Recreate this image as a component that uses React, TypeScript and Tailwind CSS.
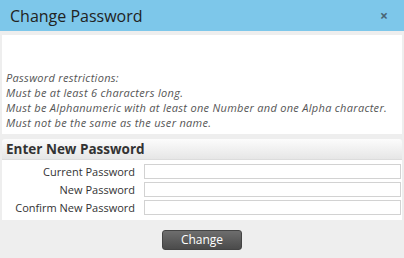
import React from 'react';

const fields = ['Current Password', 'New Password', 'Confirm New Password'];

const notes = [
  'Password restrictions:',
  'Must be at least 6 characters long.',
  'Must be Alphanumeric with at least one Number and one Alpha character.',
  'Must not be the same as the user name.'
];

export default function App() {
  return (
    <div className="w-[404px] h-[258px] overflow-hidden bg-[#eeeeee] font-['Open_Sans',sans-serif]">
      <div className="h-[31px] bg-[#7dc7ea] flex items-center justify-between pl-[10px] pr-[16px]">
        <span className="text-[16px] text-[#222] leading-none">Change Password</span>
        <span className="text-[14px] font-bold text-[#4a6475] leading-none">×</span>
      </div>

      <div className="px-[2px] pt-[4px]">
        <div className="h-[99px] bg-white flex flex-col justify-end pb-[4px] px-[4px] italic text-[11px] leading-[15px] tracking-[0.3px] text-[#555]">
          {notes.map((line) => (
            <div key={line}>{line}</div>
          ))}
        </div>

        <div className="mt-[5px] h-[21px] flex items-center px-[4px] rounded-t-[3px] bg-gradient-to-b from-[#fcfcfc] to-[#e6e6e6] border-b border-[#dcdcdc]">
          <span className="text-[13.5px] font-bold text-[#333]">Enter New Password</span>
        </div>

        <div className="bg-white pt-[4px] pb-[5px] flex flex-col gap-[3px]">
          {fields.map((label) => (
            <div key={label} className="flex items-center h-[15px]">
              <label className="w-[133px] text-right text-[11px] text-[#333] leading-none">{label}</label>
              <input type="text" className="ml-[9px] w-[257px] h-[15px] border border-[#d2d2d2] bg-white outline-none" />
            </div>
          ))}
        </div>
      </div>

      <div className="flex justify-center mt-[10px]">
        <button className="w-[80px] h-[20px] rounded-[3px] bg-gradient-to-b from-[#6e6e6e] to-[#4b4b4b] border border-[#444] text-white text-[12px] leading-none">
          Change
        </button>
      </div>
    </div>
  );
}
